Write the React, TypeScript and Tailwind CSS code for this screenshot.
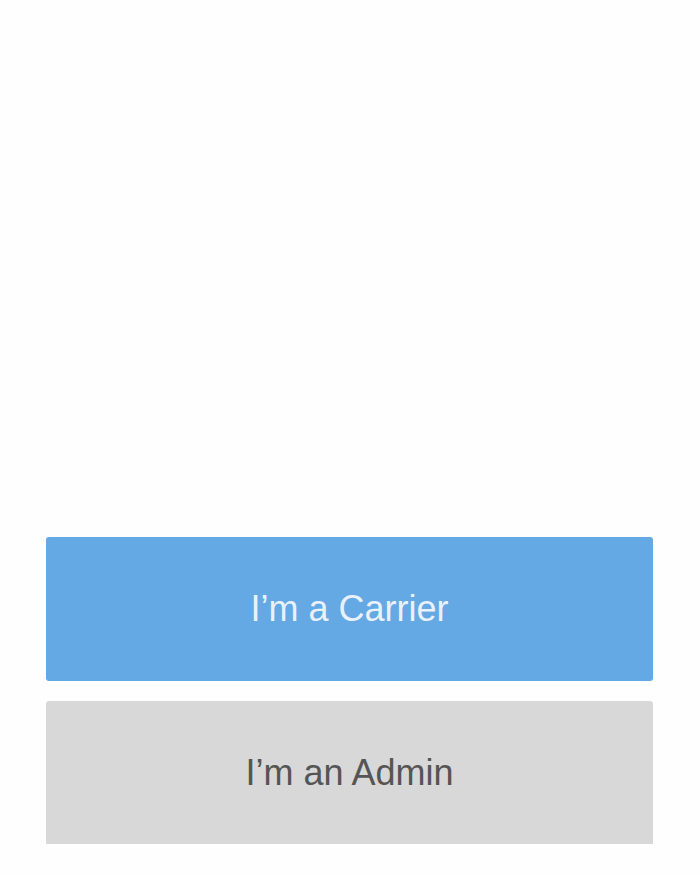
export default function App() {
  return (
    <div className="flex h-[874px] w-[700px] flex-col justify-end bg-[#fefefe] pb-[30px] pl-[46px] pr-[47px] font-['Liberation_Sans',Arial,sans-serif]">
      <div className="flex flex-col gap-5">
        <button className="flex h-[144px] items-center justify-center rounded-[3px] bg-[#64a8e4] text-[36px] text-[#e9f1fb]">
          I’m a Carrier
        </button>
        <button className="flex h-[143px] items-center justify-center rounded-t-[3px] bg-[#d8d8d8] text-[36px] text-[#555555]">
          I’m an Admin
        </button>
      </div>
    </div>
  );
}
